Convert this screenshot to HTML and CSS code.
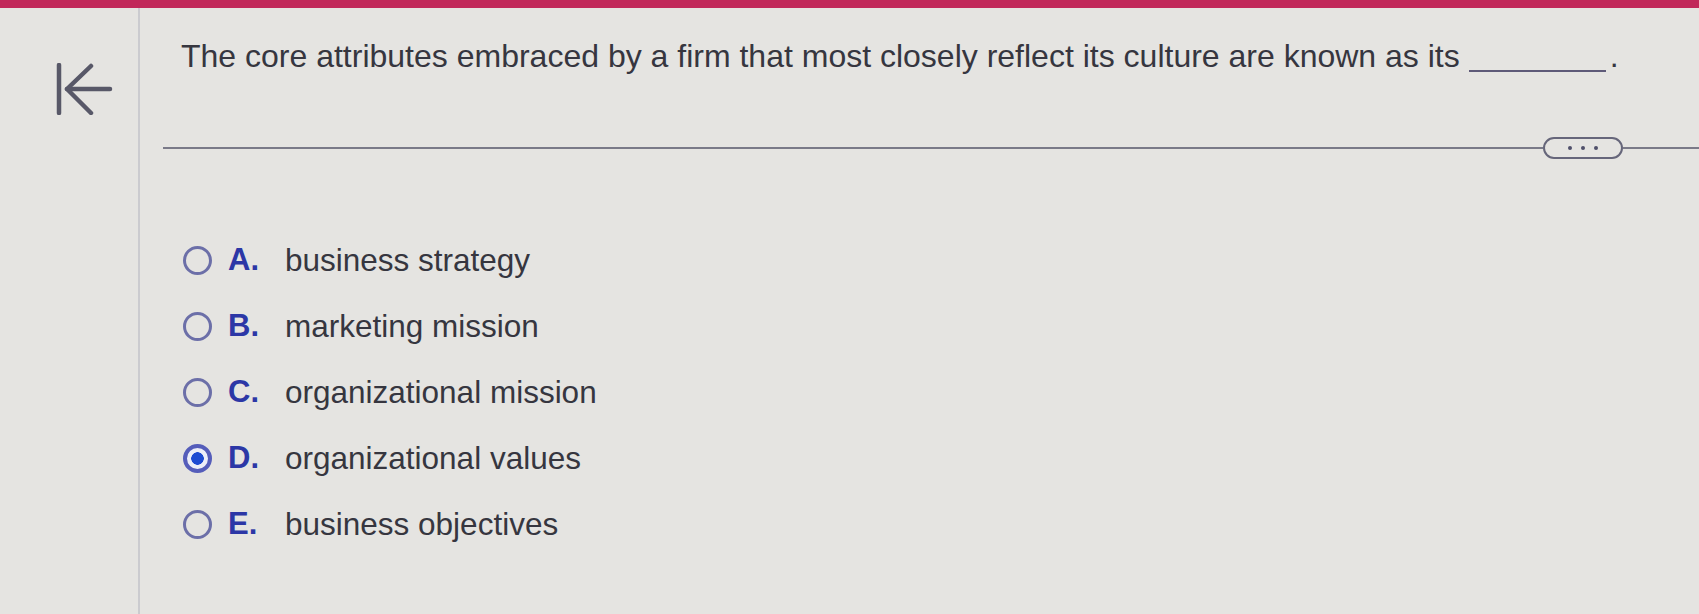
FILE: index.html
```html
<!DOCTYPE html>
<html lang="en">
<head>
<meta charset="utf-8">
<title>Question</title>
<link rel="stylesheet" href="styles.css">
</head>
<body>
<div class="topbar"></div>
<div class="main">
  <aside class="sidebar">
    <button class="back" aria-label="Back">
      <svg width="60" height="52" viewBox="0 0 60 52" fill="none" stroke="#585868" stroke-width="4.5" stroke-linecap="round" stroke-linejoin="round">
        <path d="M4 2 V50"/>
        <path d="M36 3 L12 26 L36 50"/>
        <path d="M12 26 H55"/>
      </svg>
    </button>
  </aside>
  <section class="content">
    <p class="question">The core attributes embraced by a firm that most closely reflect its culture are known as its <span class="blank"></span>.</p>
    <div class="divider">
      <span class="rule"></span>
      <span class="more"><i></i><i></i><i></i></span>
      <span class="rule short"></span>
    </div>
    <ul class="options">
      <li class="option"><span class="radio"></span><span class="letter">A.</span><span class="text">business strategy</span></li>
      <li class="option"><span class="radio"></span><span class="letter">B.</span><span class="text">marketing mission</span></li>
      <li class="option"><span class="radio"></span><span class="letter">C.</span><span class="text">organizational mission</span></li>
      <li class="option"><span class="radio checked"></span><span class="letter">D.</span><span class="text">organizational values</span></li>
      <li class="option"><span class="radio"></span><span class="letter">E.</span><span class="text">business objectives</span></li>
    </ul>
  </section>
</div>
</body>
</html>
```
FILE: styles.css
```css
* { box-sizing: border-box; }
html, body { margin: 0; padding: 0; }
body {
  background: #e5e4e1;
  font-family: "Liberation Sans", Arial, sans-serif;
  color: #36363f;
  width: 1699px;
  height: 614px;
  overflow: hidden;
}
.topbar {
  height: 8px;
  background: #c1285a;
}
.main {
  display: flex;
  height: 606px;
}
.sidebar {
  width: 140px;
  flex: 0 0 140px;
  border-right: 2px solid #cbcbcf;
  padding: 55px 0 0 55px;
}
.back {
  display: block;
  padding: 0;
  margin: 0;
  border: 0;
  background: transparent;
}
.back svg { display: block; }
.content {
  flex: 1;
  display: flex;
  flex-direction: column;
}
.question {
  margin: 0;
  padding: 30px 0 0 41px;
  font-size: 32px;
  line-height: 36px;
  white-space: nowrap;
}
.blank {
  display: inline-block;
  width: 137px;
  height: 2px;
  margin-right: 4px;
  background: #5e5a78;
  vertical-align: -5px;
}
.divider {
  display: flex;
  align-items: center;
  margin: 63px 0 0 23px;
  height: 22px;
}
.rule {
  flex: 1;
  height: 2px;
  background: #7a7a88;
}
.rule.short { flex: 0 0 76px; }
.more {
  display: flex;
  align-items: center;
  justify-content: center;
  gap: 9px;
  width: 80px;
  height: 22px;
  border: 2px solid #66667a;
  border-radius: 11px;
}
.more i {
  width: 4px;
  height: 4px;
  border-radius: 50%;
  background: #50506a;
}
.options {
  list-style: none;
  margin: 68px 0 0 43px;
  padding: 0;
}
.option {
  display: flex;
  align-items: center;
  height: 66px;
}
.radio {
  width: 29px;
  height: 29px;
  border: 3px solid #6c6fa8;
  border-radius: 50%;
  margin-right: 16px;
  flex: 0 0 auto;
}
.radio.checked {
  border: 4px solid #555dba;
  background: radial-gradient(circle, #1d4bd2 0 6px, #eceef8 6.5px 100%);
}
.letter {
  width: 57px;
  font-weight: bold;
  font-size: 31px;
  color: #2c37a6;
}
.text {
  font-size: 31.5px;
}
```
